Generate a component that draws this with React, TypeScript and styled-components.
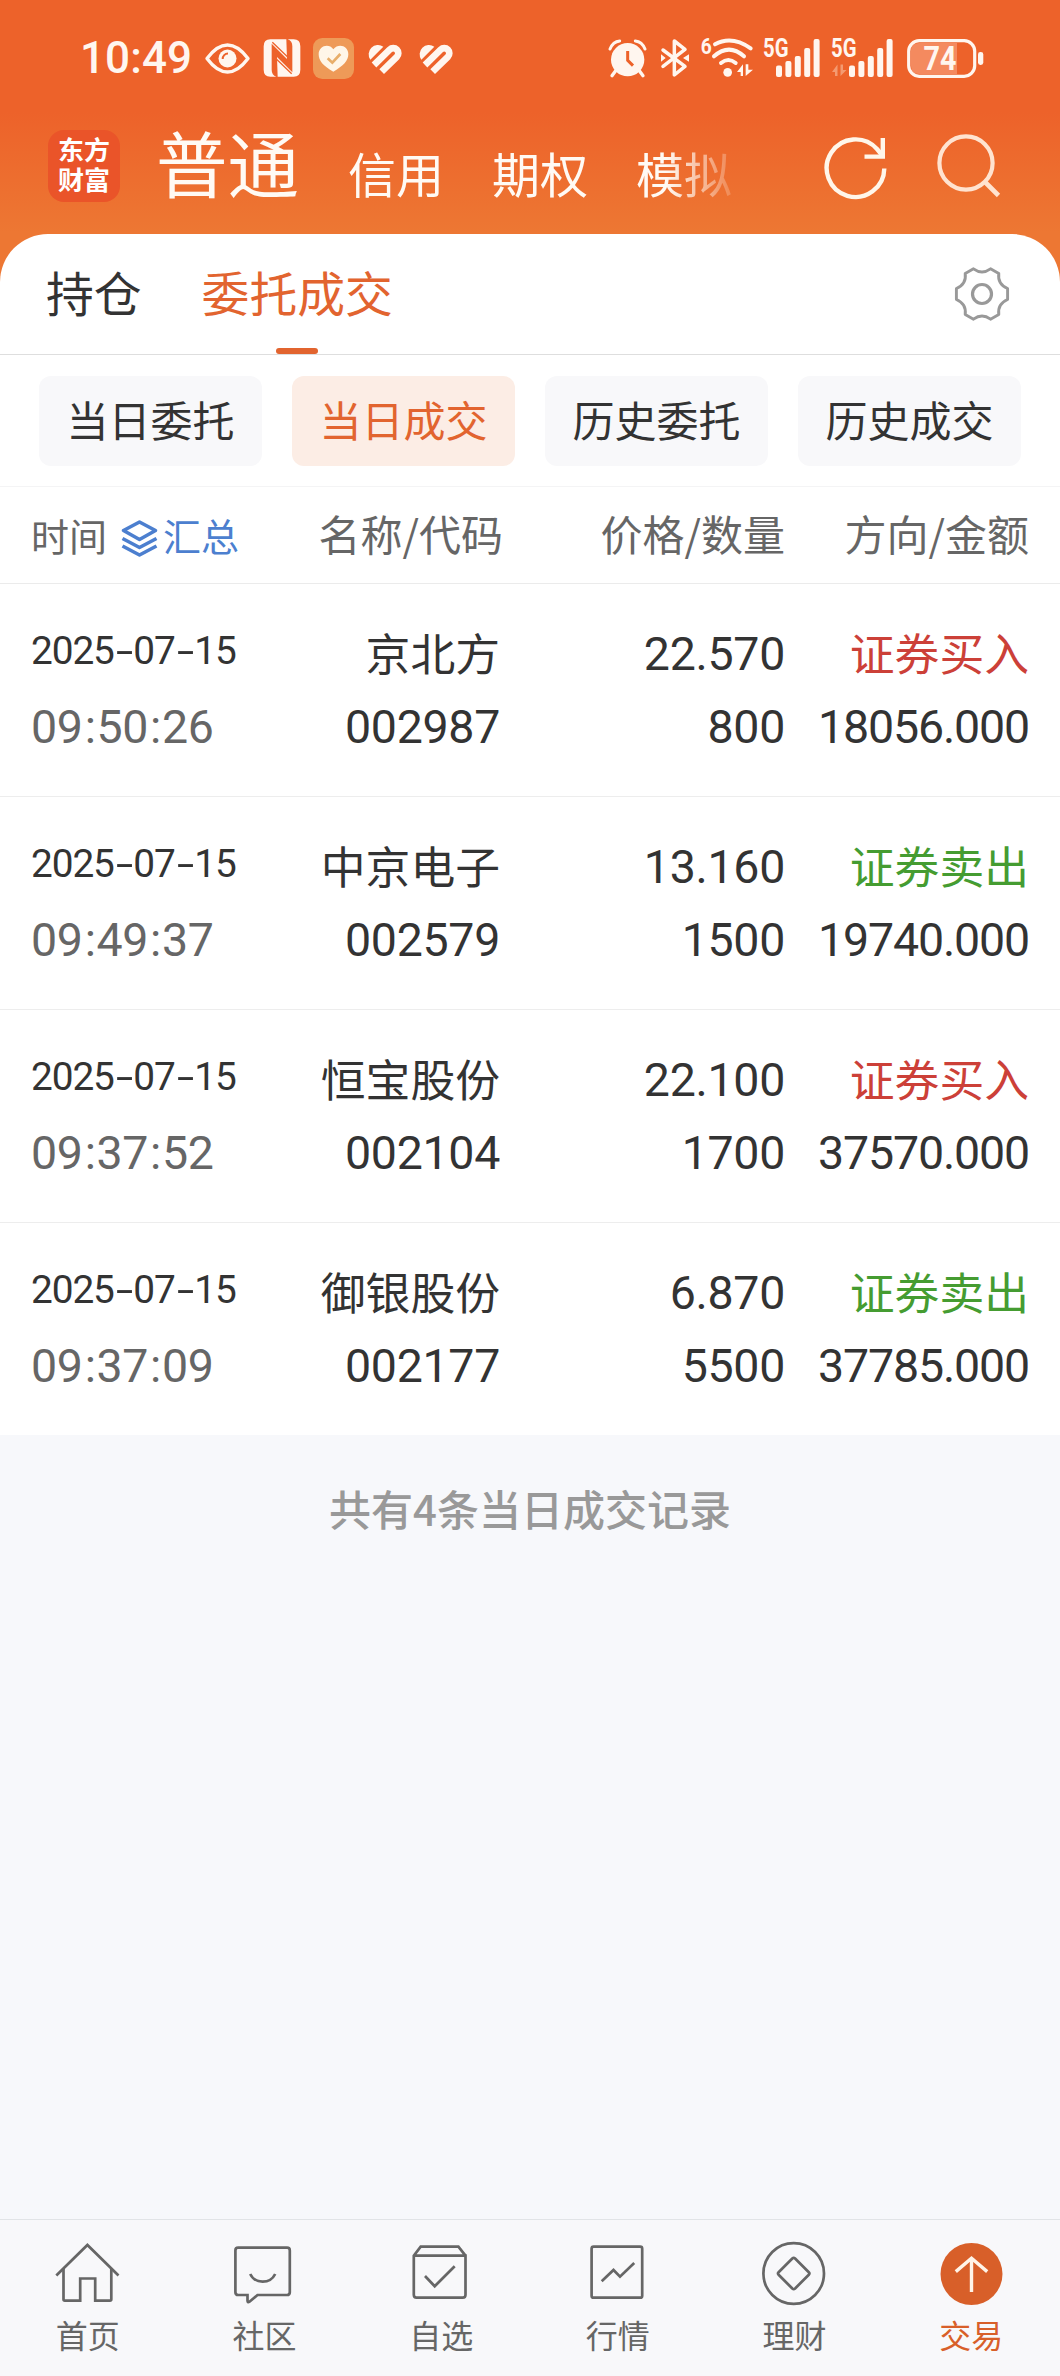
import React from "react";
import styled, { createGlobalStyle } from "styled-components";

const cjk = `"Noto Sans CJK SC", "Noto Sans", sans-serif`;
const numeric = `Roboto, "Noto Sans CJK SC", sans-serif`;

const color = {
  accent: "#e2642f",
  ink: "#333333",
  muted: "#666666",
  faint: "#999999",
  buy: "#cc4038",
  sell: "#459c31",
  link: "#4c7fcf",
  canvas: "#f7f8fb",
};

const GlobalStyle = createGlobalStyle`
  * { box-sizing: border-box; }
  body { margin: 0; background: ${color.canvas}; }
`;

const Screen = styled.div`
  width: 1060px;
  height: 2376px;
  display: flex;
  flex-direction: column;
  overflow: hidden;
  font-family: ${cjk};
  color: ${color.ink};
  background: linear-gradient(#ed622a 0, #ed622a 112px, #ed7733 232px, #ed7733 290px, ${color.canvas} 290px);
`;

/* ---------- status bar ---------- */

const StatusBar = styled.div`
  height: 116px;
  flex: none;
  display: flex;
  align-items: center;
  justify-content: space-between;
  padding: 0 77px 0 80px;
  svg { display: block; }
`;

const StatusGroup = styled.div`
  display: flex;
  align-items: center;
`;

const Clock = styled.span`
  width: 125px;
  font: 500 44px/50px ${numeric};
  letter-spacing: 0.1px;
  color: #fff6ef;
`;

const StatusIcon = styled.svg<{ $gap?: number }>`
  margin-left: ${(p) => p.$gap ?? 0}px;
  overflow: visible;
`;

const cream = "#fff6ef";

function HeartStripe({ gap }: { gap: number }) {
  return (
    <StatusIcon $gap={gap} width="37" height="31" viewBox="0 0 111 93">
      <path d="M13 50A28 28 0 0 1 52 11Z" fill={cream} />
      <path d="M24 66L71 20A15.2 15.2 0 0 1 92.5 41.5L47 86" fill="none" stroke={cream} strokeWidth="20" />
    </StatusIcon>
  );
}

function Bars({ faded, gap }: { faded?: boolean; gap: number }) {
  const off = faded ? 18 : 13;
  const width = faded ? 62 : 57;
  const tops = [26.5, 22, 17, 9, 0];
  return (
    <StatusIcon $gap={gap} width={width} height="38" viewBox={`0 0 ${width} 38`}>
      <text x="0" y="18" fontFamily="Roboto, sans-serif" fontWeight="700" fontSize="25" textLength="25.5" lengthAdjust="spacingAndGlyphs" fill={cream}>5G</text>
      {tops.map((t, i) => (
        <rect key={i} x={off + i * 9.4} y={t} width="6" height={38 - t} rx="2" fill={cream} />
      ))}
      {faded && <path d="M1 33L6.5 25.5V37H4V33ZM9.5 25.5V37L15.5 31H12V25.5Z" fill="#f49a71" />}
    </StatusIcon>
  );
}

function Status() {
  return (
    <StatusBar>
      <StatusGroup>
        <Clock>10:49</Clock>
        <StatusIcon width="45" height="31" viewBox="0 0 45 31">
          <path d="M2 15.5Q12 2 22.5 2T43 15.5Q33 29 22.5 29T2 15.5Z" fill="none" stroke={cream} strokeWidth="3.4" strokeLinejoin="round" />
          <circle cx="22.5" cy="15.5" r="9" fill={cream} />
          <path d="M17.7 16A5.3 5.3 0 0 1 23 10.5" fill="none" stroke="#ed622a" strokeWidth="2" />
        </StatusIcon>
        <StatusIcon $gap={13} width="38" height="38" viewBox="0 0 114 114">
          <path d="M22 1H70L72 60L26 14V92Q26 108 40 113H22Q2 113 2 92V22Q2 1 22 1Z" fill={cream} />
          <path d="M92 113H44L42 54L88 100V22Q88 6 74 1H92Q112 1 112 22V92Q112 113 92 113Z" fill={cream} />
          <path d="M28 10L74 54V14M86 104L40 60V100" fill="none" stroke="#ed622a" strokeWidth="4" />
        </StatusIcon>
        <StatusIcon $gap={12} width="41" height="41" viewBox="0 0 123 123">
          <rect width="123" height="123" rx="28" fill="#ee9a58" />
          <path d="M61 101C30 84 17 68 17 49C17 23 48 15 61 34C76 15 106 23 106 49C106 68 91 84 61 101Z" fill="#fff6e8" />
          <path d="M44 61L58 74L82 48" fill="none" stroke="#e8ae6a" strokeWidth="8" />
        </StatusIcon>
        <HeartStripe gap={12} />
        <HeartStripe gap={14} />
      </StatusGroup>
      <StatusGroup>
        <StatusIcon width="37" height="38" viewBox="0 0 111 114">
          <circle cx="56" cy="62" r="50" fill={cream} />
          <path d="M3 30Q12 8 32 6M108 30Q99 8 79 6" fill="none" stroke={cream} strokeWidth="9" strokeLinecap="round" />
          <path d="M20 95L9 110M91 95L102 110" stroke={cream} strokeWidth="10" strokeLinecap="round" />
          <path d="M56 36V64L72 80" fill="none" stroke="#ed622a" strokeWidth="9" />
        </StatusIcon>
        <StatusIcon $gap={15} width="28" height="38" viewBox="0 0 84 114">
          <path d="M6 33L72 82L40 108V6L72 31L6 82" fill="none" stroke={cream} strokeWidth="10.5" strokeLinejoin="round" strokeLinecap="round" />
          <path d="M0 46L14 57L0 68ZM84 46L66 57L84 68Z" fill={cream} />
        </StatusIcon>
        <StatusIcon $gap={12} width="52" height="38" viewBox="0 0 156 114">
          <text x="-1" y="44" fontFamily="Roboto, sans-serif" fontWeight="700" fontSize="66" textLength="33" lengthAdjust="spacingAndGlyphs" fill={cream}>6</text>
          <path d="M42 16Q92 -12 149 28M39 52Q84 12 129 52M60 72Q82 54 104 72" fill="none" stroke={cream} strokeWidth="12" strokeLinecap="round" />
          <circle cx="80" cy="100" r="13" fill={cream} />
          <path d="M108 99L126 76V111H119V99ZM134 76V111L156 92H142V76Z" fill={cream} />
        </StatusIcon>
        <Bars gap={10} />
        <Bars gap={11} faded />
        <StatusIcon $gap={14} width="76" height="39" viewBox="0 0 76 39">
          <path d="M12 4H50V35H12Q4 35 4 27V12Q4 4 12 4Z" fill="#f48a5f" />
          <rect x="1.7" y="1.7" width="66" height="35.6" rx="10.5" fill="none" stroke={cream} strokeWidth="3.2" />
          <rect x="71" y="13" width="5.3" height="13" rx="2.4" fill={cream} />
          <text x="33" y="31" textAnchor="middle" fontFamily="Roboto, sans-serif" fontWeight="700" fontSize="33" textLength="33" lengthAdjust="spacingAndGlyphs" fill={cream}>74</text>
        </StatusIcon>
      </StatusGroup>
    </StatusBar>
  );
}

/* ---------- account navigation ---------- */

const TopNav = styled.div`
  height: 118px;
  flex: none;
  display: flex;
  padding: 0 55px 0 48px;
`;

const Logo = styled.div`
  width: 72px;
  height: 72px;
  flex: none;
  margin-top: 14px;
  border-radius: 16px;
  background: #ea5429;
  color: #fff;
  font: 700 26px/30px ${cjk};
  text-align: center;
  padding-top: 4px;
`;

const AccountTabs = styled.div`
  display: flex;
  flex: none;
  width: 629px;
  margin-left: 36px;
  mask-image: linear-gradient(to right, #000 510px, transparent 590px);
`;

const AccountTab = styled.span<{ $active?: boolean }>`
  flex: none;
  color: #fffaf4;
  font-size: ${(p) => (p.$active ? 71.5 : 48)}px;
  line-height: 70px;
  margin-top: ${(p) => (p.$active ? 10 : 21)}px;
  margin-right: ${(p) => (p.$active ? 49 : 48)}px;
`;

const NavActions = styled.div`
  display: flex;
  gap: 49px;
  margin-left: 39px;
  margin-top: 17px;
`;

function AccountNav() {
  return (
    <TopNav>
      <Logo>东方<br />财富</Logo>
      <AccountTabs>
        <AccountTab $active>普通</AccountTab>
        <AccountTab>信用</AccountTab>
        <AccountTab>期权</AccountTab>
        <AccountTab>模拟</AccountTab>
      </AccountTabs>
      <NavActions>
        <svg width="64" height="68" viewBox="0 0 64 68" fill="none" stroke="#fff6ea" strokeWidth="4.4">
          <path d="M60.3 35.5A28.8 28.8 0 1 1 53 16L58 22" />
          <path d="M58.8 5V23.6H40.5" />
        </svg>
        <svg width="66" height="68" viewBox="0 0 66 68" fill="none" stroke="#ffe3d0" strokeWidth="4.2">
          <circle cx="29" cy="30" r="26.6" />
          <path d="M47.5 48.5L61.5 62.5" strokeWidth="4.6" />
        </svg>
      </NavActions>
    </TopNav>
  );
}

/* ---------- sheet ---------- */

const Sheet = styled.main`
  flex: none;
  background: #fff;
  border-radius: 48px 48px 0 0;
`;

const SectionTabs = styled.div`
  height: 121px;
  display: flex;
  border-bottom: 1px solid #dedede;
  padding: 0 50px 0 46px;
`;

const SectionTab = styled.div<{ $active?: boolean }>`
  display: flex;
  flex-direction: column;
  align-items: center;
  justify-content: space-between;
  margin-right: 60px;
  padding-top: 23px;
  font-size: 47.8px;
  line-height: 70px;
  color: ${(p) => (p.$active ? color.accent : color.ink)};
  &::after {
    content: "";
    width: 42px;
    height: 6px;
    border-radius: 3px;
    background: ${(p) => (p.$active ? color.accent : "transparent")};
  }
`;

const Gear = styled.svg`
  margin: 32px 0 0 auto;
`;

const FilterRow = styled.div`
  display: flex;
  gap: 30px;
  height: 132px;
  padding: 21px 39px 0;
  border-bottom: 1px solid #f4f4f5;
`;

const Filter = styled.button<{ $active?: boolean }>`
  width: 223px;
  height: 90px;
  padding: 0 0 5px;
  border: 0;
  border-radius: 12px;
  font: 400 42px/84px ${cjk};
  color: ${(p) => (p.$active ? color.accent : color.ink)};
  background: ${(p) => (p.$active ? "#fcede5" : "#f8f8fa")};
`;

const Grid = styled.div`
  display: grid;
  grid-template-columns: 200px 269px 285px 244px;
  padding-left: 31px;
`;

const HeadRow = styled(Grid)`
  height: 97px;
  border-bottom: 1px solid #ebebeb;
  color: ${color.muted};
  font-size: 42px;
  line-height: 60px;
  padding-top: 16px;
`;

const HeadCell = styled.div`
  text-align: right;
  white-space: nowrap;
  &:nth-child(2) { margin-right: -3px; }
`;

const TimeHead = styled.div`
  display: flex;
  align-items: center;
  align-self: start;
  white-space: nowrap;
  font-size: 38px;
  padding-top: 2px;
`;

const Summary = styled.span`
  display: flex;
  align-items: center;
  gap: 5px;
  margin-left: 14px;
  color: ${color.link};
  svg { margin-top: 5px; }
`;

const TradeRow = styled(Grid)`
  height: 213px;
  border-bottom: 1px solid #ededed;
  padding-top: 36px;
  &:last-child { height: 212px; border-bottom: 0; }
`;

const Cell = styled.div`
  display: flex;
  flex-direction: column;
  align-items: flex-end;
  white-space: nowrap;
  &:first-child { align-items: flex-start; }
`;

const Name = styled.span<{ $tone?: string }>`
  font-size: 44.8px;
  line-height: 64px;
  height: 73px;
  color: ${(p) => p.$tone ?? color.ink};
`;

const Figure = styled.span<{ $muted?: boolean; $tight?: boolean }>`
  font: 400 46.5px/69px ${numeric};
  letter-spacing: ${(p) => (p.$tight ? -1.15 : -0.3)}px;
  height: 73px;
  color: ${(p) => (p.$muted ? color.muted : color.ink)};
`;

const Colon = styled.span`
  letter-spacing: 0.5px;
  padding-left: 2px;
`;

const DateText = styled.span`
  font: 400 38.8px/62px ${numeric};
  letter-spacing: -1.1px;
  height: 73px;
`;

const Dash = styled.span`
  display: inline-block;
  width: 19.5px;
  text-align: center;
  transform: scaleX(1.6);
`;

const Footnote = styled.p`
  flex: 1;
  margin: 0;
  padding-top: 42px;
  text-align: center;
  color: ${color.faint};
  font-size: 42px;
  font-weight: 500;
  line-height: 62px;
  background: ${color.canvas};
`;

type Trade = { date: string; time: string; name: string; code: string; price: string; qty: string; buy: boolean; amount: string };

const trades: Trade[] = [
  { date: "2025-07-15", time: "09:50:26", name: "京北方", code: "002987", price: "22.570", qty: "800", buy: true, amount: "18056.000" },
  { date: "2025-07-15", time: "09:49:37", name: "中京电子", code: "002579", price: "13.160", qty: "1500", buy: false, amount: "19740.000" },
  { date: "2025-07-15", time: "09:37:52", name: "恒宝股份", code: "002104", price: "22.100", qty: "1700", buy: true, amount: "37570.000" },
  { date: "2025-07-15", time: "09:37:09", name: "御银股份", code: "002177", price: "6.870", qty: "5500", buy: false, amount: "37785.000" },
];

function joinWith(text: string, mark: string, node: (key: number) => React.ReactNode) {
  return text.split(mark).map((part, i) => (
    <React.Fragment key={i}>
      {i > 0 && node(i)}
      {part}
    </React.Fragment>
  ));
}

/* ---------- bottom bar ---------- */

const BottomBar = styled.nav`
  flex: none;
  height: 157px;
  display: grid;
  grid-template-columns: repeat(6, 1fr);
  border-top: 1px solid #e2e4e7;
  background: #f8f8fa;
`;

const BottomItem = styled.div<{ $active?: boolean }>`
  display: flex;
  flex-direction: column;
  align-items: center;
  padding: 17px 1px 0 0;
  font-size: 32px;
  line-height: 44px;
  color: ${(p) => (p.$active ? "#d85f29" : color.muted)};
  svg { flex: none; margin-bottom: 3px; }
`;

const icons: Record<string, React.ReactNode> = {
  首页: (
    <>
      <path d="M4.3 38.5L35.4 8L66.5 38.5" />
      <path d="M11.5 32V62.3Q11.5 63.6 12.8 63.6H28.2V41.5H43.2V63.6H58Q59.3 63.6 59.3 62.3V32" />
    </>
  ),
  社区: (
    <>
      <path d="M10.2 10.7H59Q61.8 10.7 61.8 13.5V55.2Q61.8 58 59 58H29.5L21.5 64.7Q19.5 66 19.5 63.5V58H10.2Q7.4 58 7.4 55.2V13.5Q7.4 10.7 10.2 10.7Z" />
      <path d="M22.2 37Q26 44.7 34.7 44.7T47.2 37" />
    </>
  ),
  自选: (
    <>
      <path d="M8.8 18.7H60.5V57.8Q60.5 60.7 57.7 60.7H11.6Q8.8 60.7 8.8 57.8V18.7L15.7 9.7H53.4L60.5 18.7" />
      <path d="M20 39L29.7 49.3L49.7 29.3" />
    </>
  ),
  行情: (
    <>
      <rect x="9.6" y="9.7" width="50.6" height="51" rx="2" />
      <path d="M19.7 44.3L31.5 33L38 39.7L52.2 26" />
    </>
  ),
  理财: (
    <>
      <circle cx="35.7" cy="36.5" r="30.3" />
      <path d="M34.3 21.5Q35.7 20.2 37.1 21.5L50.8 35.3Q52 36.5 50.8 37.7L37.1 51.5Q35.7 52.8 34.3 51.5L20.6 37.7Q19.4 36.5 20.6 35.3Z" />
    </>
  ),
  交易: (
    <>
      <circle cx="36.5" cy="37" r="31" fill="#d85f29" stroke="none" />
      <path d="M36.5 55V21.5M20.8 34.6L36.5 21.3L52.2 34.6" stroke="#fff4e8" strokeWidth="3.4" />
    </>
  ),
};

export default function App() {
  return (
    <Screen>
      <GlobalStyle />
      <Status />
      <AccountNav />
      <Sheet>
        <SectionTabs>
          <SectionTab>持仓</SectionTab>
          <SectionTab $active>委托成交</SectionTab>
          <Gear width="56" height="56" viewBox="-28 -28 56 56" fill="none" stroke="#999" strokeWidth="2.9" strokeLinejoin="round">
            <circle r="9.5" strokeWidth="3.2" />
            <path d="M-8.5 -25.2Q0 -19 8.5 -25.2L16.8 -20.5Q15.3 -10 25.6 -5.5V5.5Q15.3 10 16.8 20.5L8.5 25.2Q0 19 -8.5 25.2L-16.8 20.5Q-15.3 10 -25.6 5.5V-5.5Q-15.3 -10 -16.8 -20.5Z" />
          </Gear>
        </SectionTabs>
        <FilterRow>
          <Filter>当日委托</Filter>
          <Filter $active>当日成交</Filter>
          <Filter>历史委托</Filter>
          <Filter>历史成交</Filter>
        </FilterRow>
        <HeadRow>
          <TimeHead>
            时间
            <Summary>
              <svg width="37" height="38" viewBox="0 0 37 38" fill="none" stroke={color.link} strokeWidth="3.6" strokeLinejoin="round">
                <path d="M18.5 3L34.5 11.5L18.5 20.5L2.5 11.5Z" />
                <path d="M1.5 19.5L18.5 28.5L35.5 19.5M1.5 27L18.5 36L35.5 27" />
              </svg>
              汇总
            </Summary>
          </TimeHead>
          <HeadCell>名称/代码</HeadCell>
          <HeadCell>价格/数量</HeadCell>
          <HeadCell>方向/金额</HeadCell>
        </HeadRow>
        <div>
          {trades.map((t) => (
            <TradeRow key={t.code}>
              <Cell>
                <DateText>{joinWith(t.date, "-", (k) => <Dash key={k}>-</Dash>)}</DateText>
                <Figure $muted>{joinWith(t.time, ":", (k) => <Colon key={k}>:</Colon>)}</Figure>
              </Cell>
              <Cell>
                <Name>{t.name}</Name>
                <Figure>{t.code}</Figure>
              </Cell>
              <Cell>
                <Figure>{t.price}</Figure>
                <Figure>{t.qty}</Figure>
              </Cell>
              <Cell>
                <Name $tone={t.buy ? color.buy : color.sell}>{t.buy ? "证券买入" : "证券卖出"}</Name>
                <Figure $tight>{t.amount}</Figure>
              </Cell>
            </TradeRow>
          ))}
        </div>
      </Sheet>
      <Footnote>共有4条当日成交记录</Footnote>
      <BottomBar>
        {Object.keys(icons).map((label) => (
          <BottomItem key={label} $active={label === "交易"}>
            <svg width="72" height="72" viewBox="0 0 72 72" fill="none" stroke={color.muted} strokeWidth="2.7">
              {icons[label]}
            </svg>
            {label}
          </BottomItem>
        ))}
      </BottomBar>
    </Screen>
  );
}
